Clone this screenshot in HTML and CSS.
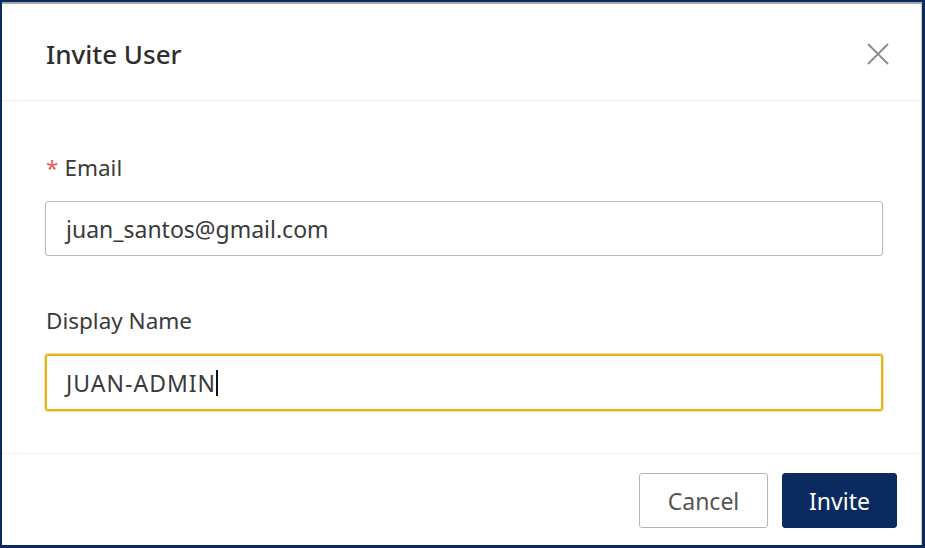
FILE: index.html
```html
<!DOCTYPE html>
<html lang="en">
<head>
<meta charset="utf-8">
<title>Invite User</title>
<link rel="stylesheet" href="styles.css">
</head>
<body>
<div class="frame">
  <div class="dialog">
    <div class="header">
      <div class="title">Invite User</div>
      <svg class="close" width="24" height="24" viewBox="0 0 24 24" aria-label="Close">
        <path d="M2 2 L22 22 M22 2 L2 22" stroke="#8a8a8a" stroke-width="1.8" fill="none"/>
      </svg>
    </div>
    <div class="body">
      <div class="field">
        <div class="label"><span class="req">*</span>Email</div>
        <div class="input">juan_santos@gmail.com</div>
      </div>
      <div class="field">
        <div class="label">Display Name</div>
        <div class="input focused"><span class="caps">JUAN-ADMIN</span><span class="caret"></span></div>
      </div>
    </div>
    <div class="footer">
      <button class="btn btn-default">Cancel</button>
      <button class="btn btn-primary">Invite</button>
    </div>
  </div>
</div>
</body>
</html>
```
FILE: styles.css
```css
html, body {
  margin: 0;
  padding: 0;
  height: 100%;
}
body {
  background: #0b2a5f;
  font-family: "Noto Sans", "Open Sans", "Liberation Sans", sans-serif;
  color: #333;
}
.frame {
  height: 100%;
  box-sizing: border-box;
  padding: 2px 3px 3px 2px;
}
.dialog {
  height: 100%;
  box-sizing: border-box;
  background: #fff;
  border-top: 2px solid #a9a9a9;
  border-right: 1px solid #c9c9c9;
  display: flex;
  flex-direction: column;
}
.header {
  height: 97px;
  box-sizing: border-box;
  display: flex;
  align-items: center;
  justify-content: space-between;
  padding: 0 31px 0 44px;
  border-bottom: 1px solid #efefef;
}
.title {
  font-size: 26px;
  font-weight: 500;
  color: #2e2e2e;
  margin-top: 4px;
}
.close {
  display: block;
  margin-top: 4px;
}
.body {
  padding: 51px 38px 42px 43px;
  display: flex;
  flex-direction: column;
  gap: 49px;
  border-bottom: 1px solid #efefef;
}
.field {
  display: flex;
  flex-direction: column;
  gap: 17px;
}
.label {
  font-size: 22.5px;
  line-height: 32px;
  color: #3a3a3a;
  padding-left: 1px;
}
.req {
  color: #f05a5a;
  margin-right: 6px;
}
.input {
  height: 55px;
  box-sizing: border-box;
  border: 1px solid #b9b9b9;
  border-radius: 3px;
  padding: 0 20px;
  display: flex;
  align-items: center;
  font-size: 23px;
  color: #3a3a3a;
}
.input.focused {
  height: 57px;
  border: 2px solid #e6b413;
  box-shadow: 0 0 0 1px #f6e3a5;
  padding-left: 19px;
}
.caps {
  letter-spacing: 1px;
}
.caret {
  display: inline-block;
  width: 2px;
  height: 26px;
  background: #111;
}
.footer {
  flex: 1;
  display: flex;
  justify-content: flex-end;
  align-items: flex-start;
  gap: 14px;
  padding: 19px 24px 0 0;
}
.btn {
  height: 55px;
  box-sizing: border-box;
  border-radius: 3px;
  font-family: inherit;
  font-size: 23px;
  padding: 0;
  cursor: pointer;
}
.btn-default {
  width: 129px;
  background: #fff;
  border: 1px solid #b5b5b5;
  color: #555;
}
.btn-primary {
  width: 115px;
  background: #0b2a5f;
  border: 1px solid #0b2a5f;
  color: #fff;
}
```
